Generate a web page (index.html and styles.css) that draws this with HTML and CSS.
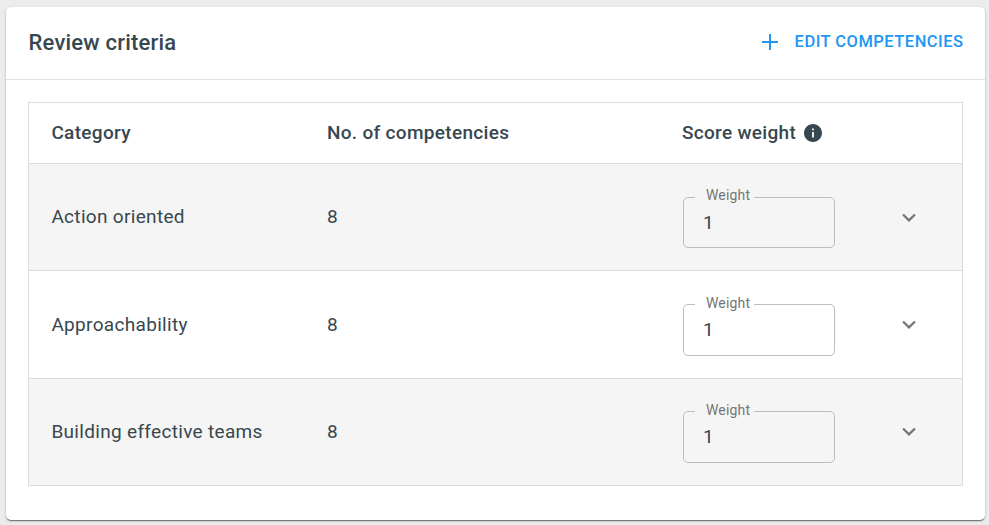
FILE: index.html
```html
<!DOCTYPE html>
<html lang="en">
<head>
  <meta charset="UTF-8">
  <meta name="viewport" content="width=device-width, initial-scale=1.0">
  <title>Review criteria</title>
  <link rel="stylesheet" href="styles.css">
</head>
<body>
  <div class="card">
    <div class="card-header">
      <h1>Review criteria</h1>
      <button class="edit-button">
        <svg class="plus" viewBox="0 0 16 16"><path d="M8 0v16M0 8h16"/></svg>
        <span>EDIT COMPETENCIES</span>
      </button>
    </div>
    <div class="criteria">
      <div class="row head">
        <div>Category</div>
        <div>No. of competencies</div>
        <div class="score">
          <span>Score weight</span>
          <svg class="info" viewBox="2 2 20 20"><path d="M12 2C6.48 2 2 6.48 2 12s4.48 10 10 10 10-4.48 10-10S17.520 2 12 2zm1 15h-2v-6h2v6zm0-8h-2V7h2v2z"/></svg>
        </div>
      </div>
      <div class="row">
        <div class="cell">Action oriented</div>
        <div class="cell">8</div>
        <fieldset class="field">
          <legend>Weight</legend>
          <input type="text" value="1">
        </fieldset>
        <svg class="chevron" viewBox="6 8 12 8"><path d="M7.410 8.590L12 13.170l4.590-4.580L18 10l-6 6-6-6z"/></svg>
      </div>
      <div class="row">
        <div class="cell">Approachability</div>
        <div class="cell">8</div>
        <fieldset class="field">
          <legend>Weight</legend>
          <input type="text" value="1">
        </fieldset>
        <svg class="chevron" viewBox="6 8 12 8"><path d="M7.410 8.590L12 13.170l4.590-4.580L18 10l-6 6-6-6z"/></svg>
      </div>
      <div class="row">
        <div class="cell">Building effective teams</div>
        <div class="cell">8</div>
        <fieldset class="field">
          <legend>Weight</legend>
          <input type="text" value="1">
        </fieldset>
        <svg class="chevron" viewBox="6 8 12 8"><path d="M7.410 8.590L12 13.170l4.590-4.580L18 10l-6 6-6-6z"/></svg>
      </div>
    </div>
  </div>
</body>
</html>
```
FILE: styles.css
```css
* {
  box-sizing: border-box;
}

body {
  margin: 0;
  padding: 7px 4px 5px 6px;
  height: 525px;
  overflow: hidden;
  background: #ececec;
  font-family: Roboto, sans-serif;
  color: #37474f;
}

.card {
  height: 512.500px;
  background: #fff;
  border-radius: 5px;
  box-shadow: 0 2px 1px -1px rgba(0, 0, 0, 0.3), 0 1px 1px rgba(0, 0, 0, 0.2), 0 1px 3px rgba(0, 0, 0, 0.2);
}

.card-header {
  display: flex;
  align-items: center;
  justify-content: space-between;
  height: 73px;
  padding: 0 21.500px 2px 22.500px;
  border-bottom: 1px solid #e0e0e0;
}

h1 {
  margin: 0;
  font-size: 22px;
  font-weight: 500;
  letter-spacing: 0.2px;
}

.edit-button {
  display: flex;
  align-items: center;
  gap: 17px;
  padding: 0;
  border: none;
  background: none;
  font: 500 16.500px/24px Roboto, sans-serif;
  letter-spacing: 0.48px;
  color: #2196f3;
  cursor: pointer;
}

.plus {
  width: 16px;
  height: 16px;
  stroke: #2196f3;
  stroke-width: 2;
}

.criteria {
  margin: 22px 22px 0 22px;
  border: 1px solid #dcdcdc;
  border-bottom: none;
}

.row {
  display: grid;
  grid-template-columns: 275.500px 355px 152px 1fr;
  align-items: center;
  height: 107.400px;
  padding-left: 22.400px;
  border-bottom: 1px solid #dcdcdc;
  font-size: 19px;
  letter-spacing: 0.32px;
}

.row:nth-child(even) {
  background: #f5f5f5;
}

.head {
  height: 61px;
  padding-bottom: 2px;
  font-weight: 500;
}

.cell {
  padding-bottom: 1px;
}

.score {
  display: flex;
  align-items: center;
  gap: 8px;
  white-space: nowrap;
}

.info {
  flex: none;
  width: 18px;
  height: 18px;
  margin-top: 2px;
  fill: #37474f;
}

.field {
  width: 152px;
  height: 62px;
  margin: 0 0 0 1px;
  padding: 0 18px 0 19px;
  border: 1px solid #bdbdbd;
  border-radius: 5px;
  min-width: 0;
}

.field legend {
  margin-left: -8px;
  padding: 0 4px 4px 11px;
  font-size: 14px;
  line-height: 18px;
  letter-spacing: 0.2px;
  color: #757575;
}

.field input {
  display: block;
  width: 100%;
  height: 28px;
  padding: 0;
  border: none;
  outline: none;
  background: none;
  font: 19px Roboto, sans-serif;
  color: #37474f;
}

.chevron {
  width: 14px;
  height: 9px;
  margin-left: 68.200px;
  fill: #757575;
}
```
